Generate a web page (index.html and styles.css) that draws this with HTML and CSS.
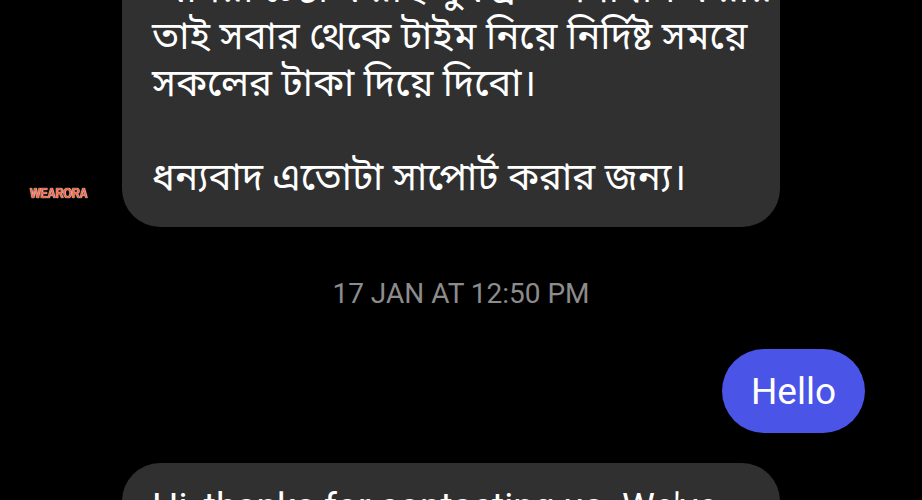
FILE: index.html
```html
<!DOCTYPE html>
<html lang="bn">
<head>
    <meta charset="UTF-8">
    <meta name="viewport" content="width=device-width, initial-scale=1.0">
    <title>Messages</title>
    <link rel="stylesheet" href="styles.css">
</head>
<body>
    <div class="thread">
        <div class="bubble bubble-in bubble-top">
            <p>আমরা চেষ্টা করছি খুব দ্রুত সমাধান করার</p>
            <p>তাই সবার থেকে টাইম নিয়ে নির্দিষ্ট সময়ে</p>
            <p>সকলের টাকা দিয়ে দিবো।</p>
            <p>&nbsp;</p>
            <p>ধন্যবাদ এতোটা সাপোর্ট করার জন্য।</p>
        </div>

        <div class="timestamp">17 JAN AT 12:50 PM</div>

        <div class="bubble bubble-out">Hello</div>

        <div class="bubble bubble-in bubble-latin">
            <p>Hi, thanks for contacting us. We've</p>
            <p>received your message and will get back</p>
        </div>
    </div>

    <div class="watermark">WEARORA</div>
</body>
</html>
```

FILE: styles.css
```css
html, body {
    margin: 0;
    padding: 0;
    background: #000;
    height: 500px;
    overflow: hidden;
}
body {
    font-family: Roboto, "Noto Sans Bengali", "Lohit Bengali", "Noto Sans", sans-serif;
    color: #fff;
    position: relative;
}
.thread {
    display: flex;
    flex-direction: column;
    align-items: flex-start;
    margin-top: -55px;
}
.bubble p {
    margin: 0;
    white-space: nowrap;
}
.bubble-in {
    box-sizing: border-box;
    width: 658px;
    margin-left: 122px;
    background: #303030;
    border-radius: 38px;
    padding: 20px 30px 27px;
}
.bubble-top {
    font-size: 38.5px;
    line-height: 47px;
}
.timestamp {
    align-self: center;
    margin-top: 51px;
    font-size: 28px;
    line-height: 32px;
    color: #8c8c8c;
}
.bubble-out {
    align-self: flex-end;
    margin-top: 39px;
    margin-right: 57px;
    height: 84px;
    box-sizing: border-box;
    padding: 0 29px;
    display: flex;
    align-items: center;
    background: #4a54e7;
    border-radius: 42px;
    font-size: 37px;
}
.bubble-latin {
    margin-top: 30px;
    padding-top: 20px;
    font-size: 37px;
    line-height: 47px;
}
.watermark {
    position: absolute;
    left: 30px;
    top: 185px;
    font-family: "Liberation Sans", sans-serif;
    font-weight: 700;
    font-size: 14px;
    letter-spacing: -0.3px;
    color: #f06a45;
    text-shadow: 0 0 1px #fff, 0 0 1px #fff;
    transform: scaleX(0.8);
    transform-origin: left center;
}
```
